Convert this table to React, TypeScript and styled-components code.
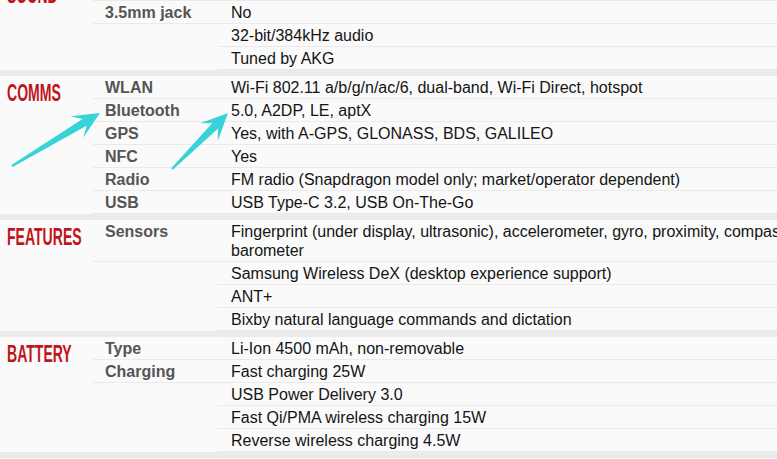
import React from "react";
import styled, { createGlobalStyle } from "styled-components";

const Global = createGlobalStyle`
  html, body {
    margin: 0;
    padding: 0;
    overflow: hidden;
    background: #fafafa;
  }
  body {
    font-family: "Liberation Sans", Arial, sans-serif;
  }
`;

const Viewport = styled.div`
  position: relative;
  width: 777px;
  height: 459px;
  overflow: hidden;
  background: #fafafa;
`;

const Page = styled.div`
  width: 820px;
  margin-top: -22px;
  display: flex;
  flex-direction: column;
`;

const Section = styled.section`
  display: flex;
  border-bottom: 6px solid #ebebeb;
`;

const TitleCell = styled.div`
  width: 93px;
  flex: none;
  box-sizing: border-box;
  padding: 5px 0 0 7px;
`;

const TitleText = styled.span`
  display: inline-block;
  font-family: "Liberation Sans", Arial, sans-serif;
  font-weight: 700;
  font-size: 24px;
  line-height: 24px;
  color: #c0141c;
  text-transform: uppercase;
  transform: scaleX(0.585);
  transform-origin: left center;
  white-space: nowrap;
`;

const Rows = styled.div`
  flex: 1;
  display: flex;
  flex-direction: column;
`;

const Row = styled.div`
  display: grid;
  grid-template-columns: 125px 1fr;
`;

const Cell = styled.div<{ $line: boolean }>`
  box-sizing: border-box;
  padding: 2px 10px 1px 0;
  font-size: 16px;
  line-height: 19px;
  border-bottom: 1px solid ${(p) => (p.$line ? "#eaeaea" : "transparent")};
`;

const Label = styled(Cell)`
  padding-left: 12px;
  font-weight: 700;
  color: #555555;
`;

const Value = styled(Cell)`
  padding-left: 13px;
  color: #141414;
`;

const Overlay = styled.svg`
  position: absolute;
  left: 0;
  top: 0;
  pointer-events: none;
`;

type Spec = [string, string];

const sections: { title: string; rows: Spec[] }[] = [
  {
    title: "Sound",
    rows: [
      ["Loudspeaker", "Yes, with stereo speakers"],
      ["3.5mm jack", "No"],
      ["", "32-bit/384kHz audio"],
      ["", "Tuned by AKG"],
    ],
  },
  {
    title: "Comms",
    rows: [
      ["WLAN", "Wi-Fi 802.11 a/b/g/n/ac/6, dual-band, Wi-Fi Direct, hotspot"],
      ["Bluetooth", "5.0, A2DP, LE, aptX"],
      ["GPS", "Yes, with A-GPS, GLONASS, BDS, GALILEO"],
      ["NFC", "Yes"],
      ["Radio", "FM radio (Snapdragon model only; market/operator dependent)"],
      ["USB", "USB Type-C 3.2, USB On-The-Go"],
    ],
  },
  {
    title: "Features",
    rows: [
      [
        "Sensors",
        "Fingerprint (under display, ultrasonic), accelerometer, gyro, proximity, compass, barometer",
      ],
      ["", "Samsung Wireless DeX (desktop experience support)"],
      ["", "ANT+"],
      ["", "Bixby natural language commands and dictation"],
    ],
  },
  {
    title: "Battery",
    rows: [
      ["Type", "Li-Ion 4500 mAh, non-removable"],
      ["Charging", "Fast charging 25W"],
      ["", "USB Power Delivery 3.0"],
      ["", "Fast Qi/PMA wireless charging 15W"],
      ["", "Reverse wireless charging 4.5W"],
    ],
  },
];

function arrowPoints(x1: number, y1: number, x2: number, y2: number): string {
  const dx = x2 - x1;
  const dy = y2 - y1;
  const L = Math.hypot(dx, dy);
  const ux = dx / L;
  const uy = dy / L;
  const nx = -uy;
  const ny = ux;
  const local: [number, number][] = [
    [0, -1.1],
    [L - 18, -4],
    [L - 27, -12.5],
    [L, 0],
    [L - 27, 12.5],
    [L - 18, 4],
    [0, 1.1],
  ];
  return local
    .map(([a, b]) => `${(x1 + a * ux + b * nx).toFixed(1)},${(y1 + a * uy + b * ny).toFixed(1)}`)
    .join(" ");
}

const Arrow: React.FC<{ from: [number, number]; to: [number, number] }> = ({ from, to }) => (
  <polygon points={arrowPoints(from[0], from[1], to[0], to[1])} fill="#38d3d6" />
);

export default function App() {
  return (
    <>
      <Global />
      <Viewport>
        <Page>
          {sections.map((s) => (
            <Section key={s.title}>
              <TitleCell>
                <TitleText>{s.title}</TitleText>
              </TitleCell>
              <Rows>
                {s.rows.map(([label, value], i) => (
                  <Row key={i}>
                    <Label $line={label !== ""}>{label}</Label>
                    <Value $line={true}>{value}</Value>
                  </Row>
                ))}
              </Rows>
            </Section>
          ))}
        </Page>
        <Overlay width={777} height={459} viewBox="0 0 777 459">
          <Arrow from={[12, 166]} to={[100, 113]} />
          <Arrow from={[172, 169]} to={[228, 113]} />
        </Overlay>
      </Viewport>
    </>
  );
}
